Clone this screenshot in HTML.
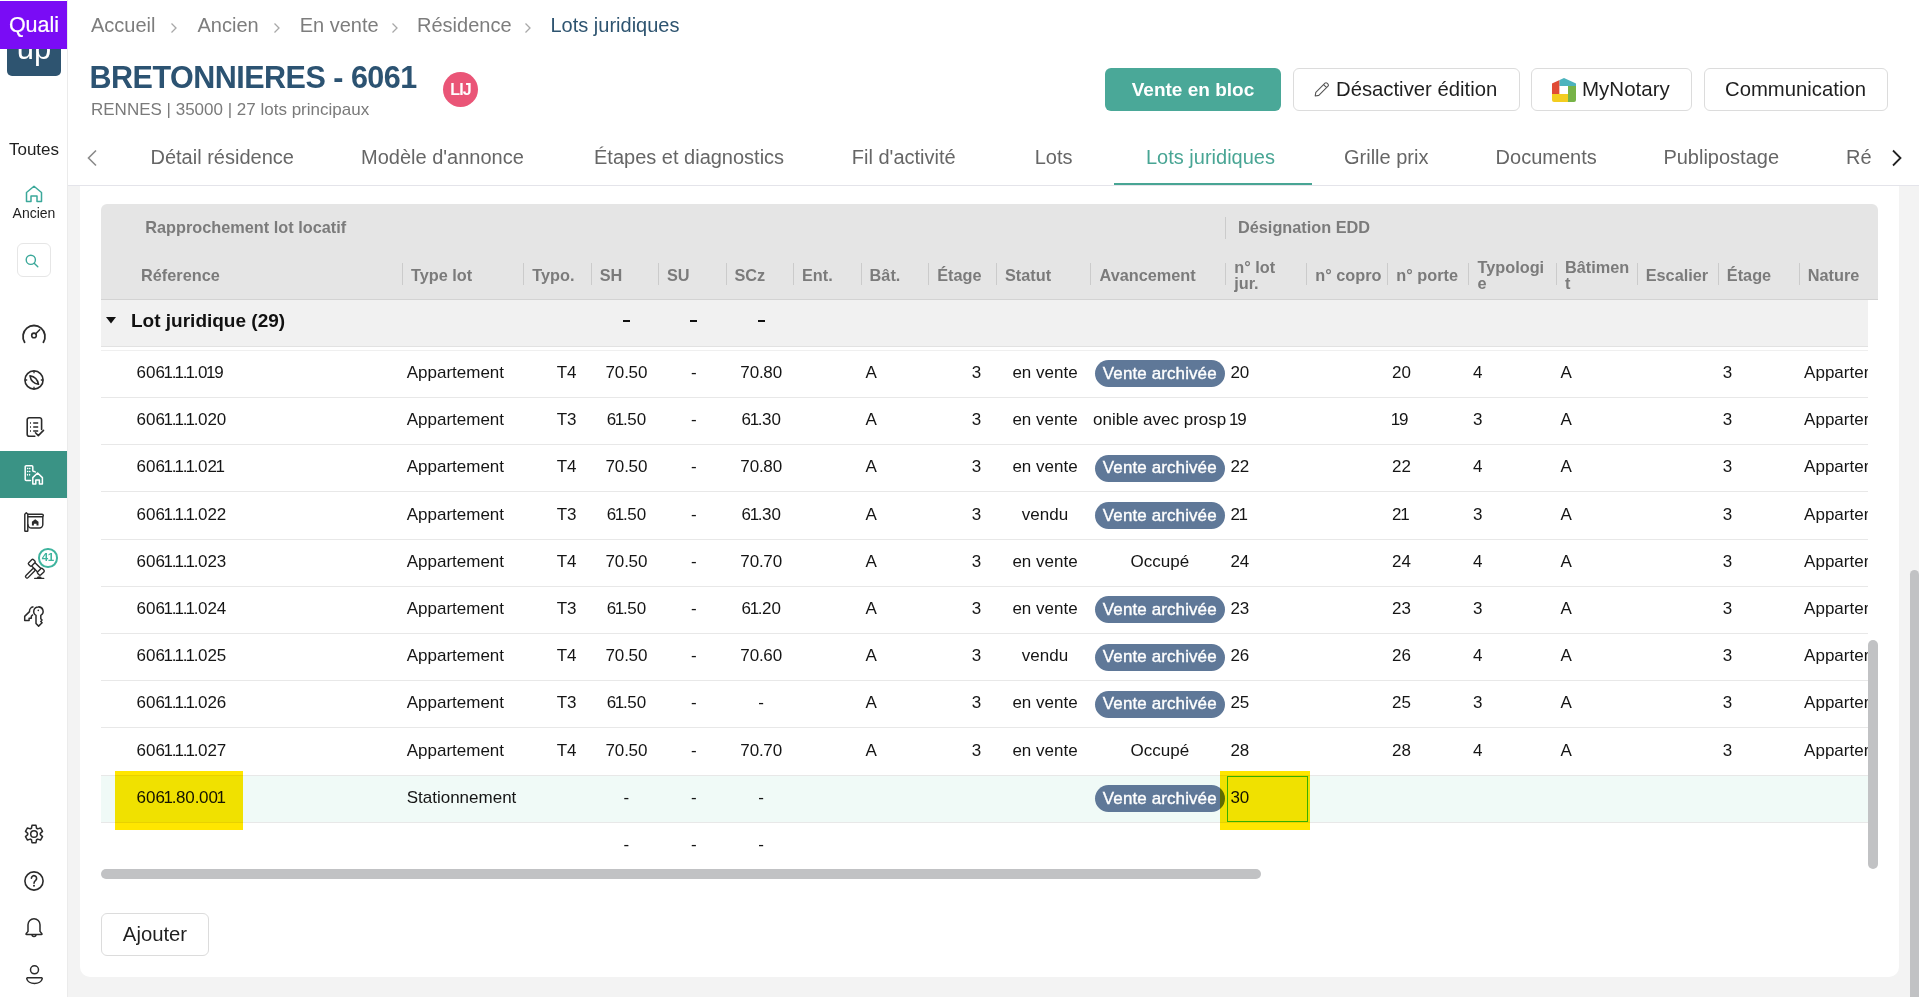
<!DOCTYPE html>
<html><head><meta charset="utf-8"><title>Lots juridiques</title><style>
html,body{margin:0;padding:0;}
body{width:1919px;height:997px;position:relative;overflow:hidden;background:#f3f3f3;font-family:"Liberation Sans",sans-serif;}
.t{position:absolute;line-height:1;white-space:nowrap;}
svg{position:absolute;overflow:visible;}
</style></head><body>
<div style="position:absolute;left:68px;top:0px;width:1851px;height:186px;background:#fff;"></div>
<div style="position:absolute;left:68px;top:185px;width:1851px;height:1px;background:#e4e4ea;"></div>
<div style="position:absolute;left:80px;top:186px;width:1819px;height:791px;background:#fff;border-radius:0 0 10px 10px;"></div>
<div style="position:absolute;left:0px;top:0px;width:67px;height:997px;background:#fff;"></div>
<div style="position:absolute;left:67px;top:0px;width:1px;height:997px;background:#ebebeb;"></div>
<div style="position:absolute;left:7px;top:38px;width:54px;height:38px;background:#2e5470;border-radius:0 0 5px 5px;"></div>
<div class="t" style="left:-266.00px;width:600px;text-align:center;top:33.26px;font-size:31px;color:#fff;">up</div>
<div style="position:absolute;left:0px;top:1px;width:67px;height:48px;background:#7a0cf5;"></div>
<div class="t" style="left:-266.00px;width:600px;text-align:center;top:14.80px;font-size:21.5px;color:#fff;-webkit-text-stroke:0.2px #fff;">Quali</div>
<div class="t" style="left:-266.00px;width:600px;text-align:center;top:140.61px;font-size:17px;color:#1f1f1f;">Toutes</div>
<svg style="left:25px;top:185px" width="18" height="18" viewBox="0 0 18 18"><path d="M1.5 16.5V7.5L9 1.2l7.5 6.3v9h-4.5v-5.5h-6v5.5z" fill="none" stroke="#3ba89a" stroke-width="1.5" stroke-linejoin="round"/></svg>
<div class="t" style="left:-266.00px;width:600px;text-align:center;top:206.15px;font-size:14px;color:#1f1f1f;">Ancien</div>
<div style="position:absolute;left:17px;top:243px;width:32px;height:32px;border:1px solid #e6e6e6;border-radius:6px;background:#fff;"></div>
<svg style="left:24.5px;top:254px" width="14" height="14" viewBox="0 0 14 14"><circle cx="5.8" cy="5.8" r="4.6" fill="none" stroke="#3ba89a" stroke-width="1.4"/><path d="M9.2 9.2l3.6 3.6" stroke="#3ba89a" stroke-width="1.4" stroke-linecap="round"/></svg>
<svg style="left:22px;top:323px" width="24" height="20" viewBox="0 0 24 20"><path d="M2.6 19.2A11 11 0 1 1 21.4 19.2" fill="none" stroke="#2b2b2b" stroke-width="1.8" stroke-linecap="round"/><circle cx="12" cy="12.4" r="2.3" fill="none" stroke="#2b2b2b" stroke-width="1.6"/><path d="M13.7 10.7l4-4" stroke="#2b2b2b" stroke-width="1.6" stroke-linecap="round"/></svg>
<svg style="left:24px;top:370px" width="20" height="20" viewBox="0 0 20 20"><circle cx="10" cy="10" r="9.1" fill="none" stroke="#2b2b2b" stroke-width="1.6"/><path d="M6 5.8Q13.2 7 14.5 14.3Q7.2 13.1 6 5.8z" fill="none" stroke="#2b2b2b" stroke-width="1.6" stroke-linejoin="round"/><path d="M10 1v2.2M10 16.8V19M1 10h2.2M16.8 10H19" stroke="#2b2b2b" stroke-width="1.3"/></svg>
<svg style="left:26px;top:417px" width="18" height="20" viewBox="0 0 18 20"><path d="M8.8 19.2H3.2A2 2 0 0 1 1.2 17.2V2.8A2 2 0 0 1 3.2 0.8h10.4a2 2 0 0 1 2 2V12.4" fill="none" stroke="#2b2b2b" stroke-width="1.6" stroke-linecap="round"/><path d="M4 6h1M7.2 6h5M4 10h1M7.2 10h5M4 14h1M7.2 14h5" stroke="#2b2b2b" stroke-width="1.6"/><path d="M9.5 15.8l2.8 2.8 5.2-5.2" fill="none" stroke="#2b2b2b" stroke-width="1.6" stroke-linecap="round" stroke-linejoin="round"/></svg>
<div style="position:absolute;left:0px;top:451px;width:67px;height:47px;background:#3a9385;"></div>
<svg style="left:24px;top:465px" width="20" height="20" viewBox="0 0 20 20"><path d="M6.5 15.6H2.2a1 1 0 0 1-1-1V1.8a1 1 0 0 1 1-1h5.6a1 1 0 0 1 1 1v3.6a1 1 0 0 0 1 1h0.4a1 1 0 0 1 1 0.6" fill="none" stroke="#fff" stroke-width="1.5" stroke-linecap="round"/><path d="M3.5 3.5h0.3M5.6 3.5h0.3M3.5 6.5h0.3M5.6 6.5h0.3M3.5 9.5v0.6M5.6 9.5v0.6" stroke="#fff" stroke-width="1.3" stroke-linecap="round"/><path d="M8.8 18.9V12.6l4.8-4.6 4.8 4.6v6.3h-3v-3.8h-3.6v3.8z" fill="none" stroke="#fff" stroke-width="1.5" stroke-linejoin="round"/></svg>
<svg style="left:24px;top:512px" width="20" height="20" viewBox="0 0 20 20"><g fill="none" stroke="#2b2b2b" stroke-width="1.45" stroke-linejoin="round"><path d="M0.8 2.2L2.3 0.8 3.8 2.2V18.8a0.5 0.5 0 0 1-0.5 0.5H1.3a0.5 0.5 0 0 1-0.5-0.5z"/><path d="M3.8 2.2h14.2a1.3 1.3 0 0 1 0 2.6H3.8"/><path d="M18.8 4.8v7.8a3.4 3.4 0 0 1-3.4 3.4H7.6A3.8 3.8 0 0 1 3.8 12.2"/></g><path d="M7.9 13.6V9.8l3.3-2.6 3.3 2.6v3.8h-2v-1.9h-2.6v1.9z" fill="#2b2b2b"/></svg>
<svg style="left:24px;top:559px" width="20" height="20" viewBox="0 0 20 20"><g transform="translate(12.3 8.3) rotate(45)" fill="none" stroke="#2b2b2b" stroke-width="1.4" stroke-linejoin="round"><rect x="-8.6" y="-3.4" width="4.4" height="6.8" rx="1.3"/><path d="M-4.2 -2.4H4.2M-4.2 2.4H4.2"/><rect x="4.2" y="-3.4" width="4.4" height="6.8" rx="1.3"/><rect x="-1.5" y="2.4" width="3" height="12.2" rx="1.5"/></g><path d="M10.6 19.3h9.2" stroke="#2b2b2b" stroke-width="1.3" stroke-linecap="round"/><path d="M12.6 19.2q0.2-2 2.6-2 2.4 0 2.6 2z" fill="#2b2b2b"/></svg>
<div style="position:absolute;left:38px;top:548px;width:15.5px;height:15.5px;border:2px solid #3fb49e;border-radius:50%;background:#fff;"></div>
<div class="t" style="left:-252.25px;width:600px;text-align:center;top:552.47px;font-size:11.5px;color:#3fb49e;font-weight:bold;letter-spacing:-0.3px;">41</div>
<svg style="left:24px;top:606px" width="20" height="21" viewBox="0 0 20 21"><g fill="none" stroke="#2b2b2b" stroke-width="1.5" stroke-linejoin="round"><path d="M9.5 0.7A4.6 4.6 0 0 0 5.5 5.6L0.7 10.4v4.2h4.4v-2.3h2.2v-2l1.6-1.8"/><path d="M14.2 0.9a4.5 4.5 0 0 0-2.2 8.4v8.2l2.6 2.6 3.5-3.4-1.3-1.2 1.2-1.4-1.2-1.3v-3.5a4.5 4.5 0 0 0-2.6-8.4z"/></g><circle cx="14.3" cy="4.4" r="0.8" fill="#2b2b2b"/></svg>
<svg style="left:24.2px;top:823.9px" width="20" height="20" viewBox="0 0 20 20"><path d="M12.56 4.24 L12.00 1.33 L8.00 1.33 L7.44 4.24 L6.30 4.90 L3.49 3.93 L1.49 7.40 L3.73 9.34 L3.73 10.66 L1.49 12.60 L3.49 16.07 L6.30 15.10 L7.44 15.76 L8.00 18.67 L12.00 18.67 L12.56 15.76 L13.70 15.10 L16.51 16.07 L18.51 12.60 L16.27 10.66 L16.27 9.34 L18.51 7.40 L16.51 3.93 L13.70 4.90z" fill="none" stroke="#2b2b2b" stroke-width="1.5" stroke-linejoin="round"/><circle cx="10" cy="10" r="3.3" fill="none" stroke="#2b2b2b" stroke-width="1.5"/></svg>
<svg style="left:24px;top:871px" width="20" height="20" viewBox="0 0 20 20"><circle cx="10" cy="10" r="9.1" fill="none" stroke="#2b2b2b" stroke-width="1.6"/><path d="M7.4 7.3A2.6 2.6 0 1 1 11.6 9.3C10.5 10.2 10 11 10 12.2" fill="none" stroke="#2b2b2b" stroke-width="1.6" stroke-linecap="round"/><circle cx="10" cy="14.8" r="1" fill="#2b2b2b"/></svg>
<svg style="left:25px;top:918px" width="18" height="20" viewBox="0 0 18 20"><path d="M9 0.8A6 6 0 0 0 3 6.8v6.6L1.1 15.8q-0.3 0.6 0.4 0.6h15q0.7 0 0.4-0.6L15 13.4V6.8A6 6 0 0 0 9 0.8z" fill="none" stroke="#2b2b2b" stroke-width="1.5" stroke-linejoin="round"/><path d="M7 16.6a2 2 0 0 0 4 0" fill="none" stroke="#2b2b2b" stroke-width="1.5"/></svg>
<svg style="left:26px;top:965px" width="17" height="20" viewBox="0 0 17 20"><circle cx="8.5" cy="4.8" r="4" fill="none" stroke="#2b2b2b" stroke-width="1.5"/><path d="M1.2 12.8h14.6a0.8 0.8 0 0 1 0.4 1A7.8 5.6 0 0 1 0.8 13.8a0.8 0.8 0 0 1 0.4-1z" fill="none" stroke="#2b2b2b" stroke-width="1.5" stroke-linejoin="round"/></svg>
<div class="t" style="left:91.00px;top:15.07px;font-size:20px;color:#7d7d7d;">Accueil</div>
<div class="t" style="left:197.50px;top:15.07px;font-size:20px;color:#7d7d7d;">Ancien</div>
<div class="t" style="left:299.70px;top:15.07px;font-size:20px;color:#7d7d7d;">En vente</div>
<div class="t" style="left:417.00px;top:15.07px;font-size:20px;color:#7d7d7d;">Résidence</div>
<div class="t" style="left:550.50px;top:15.07px;font-size:20px;color:#2e5470;">Lots juridiques</div>
<svg style="left:170px;top:21.5px" width="8" height="12" viewBox="0 0 8 12"><path d="M1.5 1.5L6 6l-4.5 4.5" fill="none" stroke="#a8a8a8" stroke-width="1.3"/></svg>
<svg style="left:272.5px;top:21.5px" width="8" height="12" viewBox="0 0 8 12"><path d="M1.5 1.5L6 6l-4.5 4.5" fill="none" stroke="#a8a8a8" stroke-width="1.3"/></svg>
<svg style="left:390.5px;top:21.5px" width="8" height="12" viewBox="0 0 8 12"><path d="M1.5 1.5L6 6l-4.5 4.5" fill="none" stroke="#a8a8a8" stroke-width="1.3"/></svg>
<svg style="left:524px;top:21.5px" width="8" height="12" viewBox="0 0 8 12"><path d="M1.5 1.5L6 6l-4.5 4.5" fill="none" stroke="#a8a8a8" stroke-width="1.3"/></svg>
<div class="t" style="left:89.50px;top:62.18px;font-size:30.5px;color:#2c5372;font-weight:bold;letter-spacing:-0.5px;">BRETONNIERES - 6061</div>
<div class="t" style="left:91.00px;top:101.41px;font-size:17px;color:#7a7a7a;">RENNES | 35000 | 27 lots principaux</div>
<div style="position:absolute;left:443px;top:72px;width:35px;height:35px;background:#ea5577;border-radius:50%;"></div>
<div class="t" style="left:160.50px;width:600px;text-align:center;top:82.26px;font-size:16px;color:#fff;font-weight:bold;letter-spacing:-0.9px;">LIJ</div>
<div style="position:absolute;left:1105px;top:68px;width:176px;height:43px;background:#4aa898;border-radius:6px;"></div>
<div class="t" style="left:893.00px;width:600px;text-align:center;top:80.22px;font-size:19px;color:#fff;font-weight:bold;">Vente en bloc</div>
<div style="position:absolute;left:1292.5px;top:68px;width:227px;height:43px;border:1px solid #dcdcdc;border-radius:6px;background:#fff;box-sizing:border-box;"></div>
<div style="position:absolute;left:1530.5px;top:68px;width:161px;height:43px;border:1px solid #dcdcdc;border-radius:6px;background:#fff;box-sizing:border-box;"></div>
<div style="position:absolute;left:1703.5px;top:68px;width:184px;height:43px;border:1px solid #dcdcdc;border-radius:6px;background:#fff;box-sizing:border-box;"></div>
<svg style="left:1314px;top:82px" width="16" height="15" viewBox="0 0 16 15"><path d="M1.2 14l0.6-3.6L11 1.2a1.4 1.4 0 0 1 2 0l1 1a1.4 1.4 0 0 1 0 2L4.8 13.4z M9.6 2.6l3 3" fill="none" stroke="#555" stroke-width="1.1" stroke-linejoin="round"/></svg>
<div class="t" style="left:1336.00px;top:79.12px;font-size:20.3px;color:#1f1f1f;">Désactiver édition</div>
<svg style="left:1551.5px;top:78px" width="24" height="24" viewBox="0 0 24 24"><defs><clipPath id="mn"><path d="M0 5.6L12 0 24 5.6V22a2 2 0 0 1-2 2H2a2 2 0 0 1-2-2z"/></clipPath></defs><g clip-path="url(#mn)"><rect x="0" y="0" width="7.6" height="16" fill="#e04b35"/><rect x="7.6" y="0" width="16.4" height="8" fill="#4cb3bd"/><rect x="16" y="8" width="8" height="16" fill="#77b347"/><rect x="0" y="16" width="16" height="8" fill="#f3cd1f"/><rect x="7.6" y="8" width="8.4" height="8" fill="#fff"/></g></svg>
<div class="t" style="left:1582.00px;top:78.95px;font-size:20.5px;color:#1f1f1f;">MyNotary</div>
<div class="t" style="left:1495.50px;width:600px;text-align:center;top:79.12px;font-size:20.3px;color:#1f1f1f;">Communication</div>
<svg style="left:86px;top:149px" width="12" height="18" viewBox="0 0 12 18"><path d="M10 1.5L2.5 9l7.5 7.5" fill="none" stroke="#8a8a8a" stroke-width="1.6"/></svg>
<div class="t" style="left:150.50px;top:147.37px;font-size:20px;color:#666;">Détail résidence</div>
<div class="t" style="left:361.00px;top:147.37px;font-size:20px;color:#666;">Modèle d'annonce</div>
<div class="t" style="left:594.00px;top:147.37px;font-size:20px;color:#666;">Étapes et diagnostics</div>
<div class="t" style="left:851.80px;top:147.37px;font-size:20px;color:#666;">Fil d'activité</div>
<div class="t" style="left:1034.70px;top:147.37px;font-size:20px;color:#666;">Lots</div>
<div class="t" style="left:1344.00px;top:147.37px;font-size:20px;color:#666;">Grille prix</div>
<div class="t" style="left:1495.60px;top:147.37px;font-size:20px;color:#666;">Documents</div>
<div class="t" style="left:1663.40px;top:147.37px;font-size:20px;color:#666;">Publipostage</div>
<div class="t" style="left:1146.00px;top:147.37px;font-size:20px;color:#48a594;">Lots juridiques</div>
<div style="position:absolute;left:1114px;top:182.8px;width:198px;height:2.6px;background:#48a594;"></div>
<div style="position:absolute;left:1846px;top:140px;width:25px;height:35px;overflow:hidden;"><div class="t" style="left:0.00px;top:7.37px;font-size:20px;color:#666;">Réalisations</div>
</div>
<svg style="left:1891px;top:149px" width="12" height="18" viewBox="0 0 12 18"><path d="M2 1.5L9.5 9 2 16.5" fill="none" stroke="#222" stroke-width="1.8"/></svg>
<div style="position:absolute;left:101px;top:204px;width:1777px;height:95px;background:#e5e5e5;border-radius:6px 6px 0 0;"></div>
<div style="position:absolute;left:101px;top:299px;width:1777px;height:1px;background:#d3d3d3;"></div>
<div class="t" style="left:145.30px;top:219.30px;font-size:16.3px;color:#7b7b7b;font-weight:bold;">Rapprochement lot locatif</div>
<div class="t" style="left:1238.00px;top:219.30px;font-size:16.3px;color:#7b7b7b;font-weight:bold;">Désignation EDD</div>
<div style="position:absolute;left:1225px;top:216.5px;width:1px;height:22px;background:#cbcbcb;"></div>
<div style="position:absolute;left:402px;top:263px;width:1px;height:22px;background:#cbcbcb;"></div>
<div style="position:absolute;left:523px;top:263px;width:1px;height:22px;background:#cbcbcb;"></div>
<div style="position:absolute;left:591px;top:263px;width:1px;height:22px;background:#cbcbcb;"></div>
<div style="position:absolute;left:658px;top:263px;width:1px;height:22px;background:#cbcbcb;"></div>
<div style="position:absolute;left:725.5px;top:263px;width:1px;height:22px;background:#cbcbcb;"></div>
<div style="position:absolute;left:793px;top:263px;width:1px;height:22px;background:#cbcbcb;"></div>
<div style="position:absolute;left:860.6px;top:263px;width:1px;height:22px;background:#cbcbcb;"></div>
<div style="position:absolute;left:928px;top:263px;width:1px;height:22px;background:#cbcbcb;"></div>
<div style="position:absolute;left:995.5px;top:263px;width:1px;height:22px;background:#cbcbcb;"></div>
<div style="position:absolute;left:1090px;top:263px;width:1px;height:22px;background:#cbcbcb;"></div>
<div style="position:absolute;left:1225px;top:263px;width:1px;height:22px;background:#cbcbcb;"></div>
<div style="position:absolute;left:1306px;top:263px;width:1px;height:22px;background:#cbcbcb;"></div>
<div style="position:absolute;left:1387px;top:263px;width:1px;height:22px;background:#cbcbcb;"></div>
<div style="position:absolute;left:1468px;top:263px;width:1px;height:22px;background:#cbcbcb;"></div>
<div style="position:absolute;left:1556px;top:263px;width:1px;height:22px;background:#cbcbcb;"></div>
<div style="position:absolute;left:1637px;top:263px;width:1px;height:22px;background:#cbcbcb;"></div>
<div style="position:absolute;left:1718px;top:263px;width:1px;height:22px;background:#cbcbcb;"></div>
<div style="position:absolute;left:1799px;top:263px;width:1px;height:22px;background:#cbcbcb;"></div>
<div class="t" style="left:141.00px;top:266.50px;font-size:16.3px;color:#7b7b7b;font-weight:bold;">Réference</div>
<div class="t" style="left:411.00px;top:266.50px;font-size:16.3px;color:#7b7b7b;font-weight:bold;">Type lot</div>
<div class="t" style="left:532.30px;top:266.50px;font-size:16.3px;color:#7b7b7b;font-weight:bold;">Typo.</div>
<div class="t" style="left:599.70px;top:266.50px;font-size:16.3px;color:#7b7b7b;font-weight:bold;">SH</div>
<div class="t" style="left:667.00px;top:266.50px;font-size:16.3px;color:#7b7b7b;font-weight:bold;">SU</div>
<div class="t" style="left:734.50px;top:266.50px;font-size:16.3px;color:#7b7b7b;font-weight:bold;">SCz</div>
<div class="t" style="left:802.00px;top:266.50px;font-size:16.3px;color:#7b7b7b;font-weight:bold;">Ent.</div>
<div class="t" style="left:869.60px;top:266.50px;font-size:16.3px;color:#7b7b7b;font-weight:bold;">Bât.</div>
<div class="t" style="left:937.20px;top:266.50px;font-size:16.3px;color:#7b7b7b;font-weight:bold;">Étage</div>
<div class="t" style="left:1005.00px;top:266.50px;font-size:16.3px;color:#7b7b7b;font-weight:bold;">Statut</div>
<div class="t" style="left:1099.50px;top:266.50px;font-size:16.3px;color:#7b7b7b;font-weight:bold;">Avancement</div>
<div class="t" style="left:1315.30px;top:266.50px;font-size:16.3px;color:#7b7b7b;font-weight:bold;">n° copro</div>
<div class="t" style="left:1396.30px;top:266.50px;font-size:16.3px;color:#7b7b7b;font-weight:bold;">n° porte</div>
<div class="t" style="left:1645.70px;top:266.50px;font-size:16.3px;color:#7b7b7b;font-weight:bold;">Escalier</div>
<div class="t" style="left:1726.80px;top:266.50px;font-size:16.3px;color:#7b7b7b;font-weight:bold;">Étage</div>
<div class="t" style="left:1807.80px;top:266.50px;font-size:16.3px;color:#7b7b7b;font-weight:bold;">Nature</div>
<div class="t" style="left:1234.20px;top:258.60px;font-size:16.3px;color:#7b7b7b;font-weight:bold;">n° lot</div>
<div class="t" style="left:1234.20px;top:274.90px;font-size:16.3px;color:#7b7b7b;font-weight:bold;">jur.</div>
<div class="t" style="left:1477.50px;top:258.60px;font-size:16.3px;color:#7b7b7b;font-weight:bold;">Typologi</div>
<div class="t" style="left:1477.50px;top:274.90px;font-size:16.3px;color:#7b7b7b;font-weight:bold;">e</div>
<div class="t" style="left:1565.00px;top:258.60px;font-size:16.3px;color:#7b7b7b;font-weight:bold;">Bâtimen</div>
<div class="t" style="left:1565.00px;top:274.90px;font-size:16.3px;color:#7b7b7b;font-weight:bold;">t</div>
<div style="position:absolute;left:101px;top:300px;width:1767px;height:46px;background:#f1f1f1;"></div>
<div style="position:absolute;left:101px;top:346px;width:1767px;height:1px;background:#e2e2e2;"></div>
<div style="position:absolute;left:101px;top:350px;width:1767px;height:1px;background:#efefef;"></div>
<svg style="left:106px;top:316.5px" width="10" height="7" viewBox="0 0 10 7"><path d="M0 0h10L5 6.5z" fill="#111"/></svg>
<div class="t" style="left:131.00px;top:310.92px;font-size:19px;color:#111;font-weight:bold;">Lot juridique (29)</div>
<div style="position:absolute;left:622.9px;top:320px;width:7px;height:2.2px;background:#111;"></div>
<div style="position:absolute;left:690.3px;top:320px;width:7px;height:2.2px;background:#111;"></div>
<div style="position:absolute;left:757.7px;top:320px;width:7px;height:2.2px;background:#111;"></div>
<div style="position:absolute;left:0;top:0;width:1868px;height:997px;overflow:hidden;">
<div style="position:absolute;left:101px;top:775.2px;width:1767px;height:47px;background:#f0faf7;"></div>
<div style="position:absolute;left:101px;top:397.0px;width:1767px;height:1px;background:#e8e8e8;"></div>
<div class="t" style="left:136.50px;top:364.01px;font-size:17px;color:#151515;">606<span style="margin:0 -1.3px">1</span><span style="margin-right:-0.6px">.</span><span style="margin:0 -1.3px">1</span><span style="margin-right:-0.6px">.</span><span style="margin:0 -1.3px">1</span><span style="margin-right:-0.6px">.</span>0<span style="margin:0 -1.3px">1</span>9</div>
<div class="t" style="left:406.70px;top:364.01px;font-size:17px;color:#151515;">Appartement</div>
<div class="t" style="left:-23.50px;width:600px;text-align:right;top:364.01px;font-size:17px;color:#151515;">T4</div>
<div class="t" style="left:326.40px;width:600px;text-align:center;top:364.01px;font-size:17px;color:#151515;">70<span style="margin-right:-0.6px">.</span>50</div>
<div class="t" style="left:393.80px;width:600px;text-align:center;top:364.01px;font-size:17px;color:#151515;">-</div>
<div class="t" style="left:461.20px;width:600px;text-align:center;top:364.01px;font-size:17px;color:#151515;">70<span style="margin-right:-0.6px">.</span>80</div>
<div class="t" style="left:865.60px;top:364.01px;font-size:17px;color:#151515;">A</div>
<div class="t" style="left:381.20px;width:600px;text-align:right;top:364.01px;font-size:17px;color:#151515;">3</div>
<div class="t" style="left:745.00px;width:600px;text-align:center;top:364.01px;font-size:17px;color:#151515;">en vente</div>
<div style="position:absolute;left:1095px;top:360.3px;width:130px;height:27px;background:#5f7898;border-radius:14px;"></div>
<div class="t" style="left:859.80px;width:600px;text-align:center;top:364.91px;font-size:17px;color:#fff;letter-spacing:0.1px;-webkit-text-stroke:0.35px #fff;">Vente archivée</div>
<div class="t" style="left:1230.40px;top:364.01px;font-size:17px;color:#151515;">20</div>
<div class="t" style="left:1392.00px;top:364.01px;font-size:17px;color:#151515;">20</div>
<div class="t" style="left:1473.00px;top:364.01px;font-size:17px;color:#151515;">4</div>
<div class="t" style="left:1560.50px;top:364.01px;font-size:17px;color:#151515;">A</div>
<div class="t" style="left:1722.70px;top:364.01px;font-size:17px;color:#151515;">3</div>
<div class="t" style="left:1804.10px;top:364.01px;font-size:17px;color:#151515;">Appartement</div>
<div style="position:absolute;left:101px;top:444.2px;width:1767px;height:1px;background:#e8e8e8;"></div>
<div class="t" style="left:136.50px;top:411.21px;font-size:17px;color:#151515;">606<span style="margin:0 -1.3px">1</span><span style="margin-right:-0.6px">.</span><span style="margin:0 -1.3px">1</span><span style="margin-right:-0.6px">.</span><span style="margin:0 -1.3px">1</span><span style="margin-right:-0.6px">.</span>020</div>
<div class="t" style="left:406.70px;top:411.21px;font-size:17px;color:#151515;">Appartement</div>
<div class="t" style="left:-23.50px;width:600px;text-align:right;top:411.21px;font-size:17px;color:#151515;">T3</div>
<div class="t" style="left:326.40px;width:600px;text-align:center;top:411.21px;font-size:17px;color:#151515;">6<span style="margin:0 -1.3px">1</span><span style="margin-right:-0.6px">.</span>50</div>
<div class="t" style="left:393.80px;width:600px;text-align:center;top:411.21px;font-size:17px;color:#151515;">-</div>
<div class="t" style="left:461.20px;width:600px;text-align:center;top:411.21px;font-size:17px;color:#151515;">6<span style="margin:0 -1.3px">1</span><span style="margin-right:-0.6px">.</span>30</div>
<div class="t" style="left:865.60px;top:411.21px;font-size:17px;color:#151515;">A</div>
<div class="t" style="left:381.20px;width:600px;text-align:right;top:411.21px;font-size:17px;color:#151515;">3</div>
<div class="t" style="left:745.00px;width:600px;text-align:center;top:411.21px;font-size:17px;color:#151515;">en vente</div>
<div style="position:absolute;left:1092px;top:403.6px;width:134px;height:30px;overflow:hidden;"><div class="t" style="left:1.00px;top:7.61px;font-size:17px;color:#151515;">onible avec prospect</div>
</div>
<div class="t" style="left:1230.40px;top:411.21px;font-size:17px;color:#151515;"><span style="margin:0 -1.3px">1</span>9</div>
<div class="t" style="left:1392.00px;top:411.21px;font-size:17px;color:#151515;"><span style="margin:0 -1.3px">1</span>9</div>
<div class="t" style="left:1473.00px;top:411.21px;font-size:17px;color:#151515;">3</div>
<div class="t" style="left:1560.50px;top:411.21px;font-size:17px;color:#151515;">A</div>
<div class="t" style="left:1722.70px;top:411.21px;font-size:17px;color:#151515;">3</div>
<div class="t" style="left:1804.10px;top:411.21px;font-size:17px;color:#151515;">Appartement</div>
<div style="position:absolute;left:101px;top:491.4px;width:1767px;height:1px;background:#e8e8e8;"></div>
<div class="t" style="left:136.50px;top:458.41px;font-size:17px;color:#151515;">606<span style="margin:0 -1.3px">1</span><span style="margin-right:-0.6px">.</span><span style="margin:0 -1.3px">1</span><span style="margin-right:-0.6px">.</span><span style="margin:0 -1.3px">1</span><span style="margin-right:-0.6px">.</span>02<span style="margin:0 -1.3px">1</span></div>
<div class="t" style="left:406.70px;top:458.41px;font-size:17px;color:#151515;">Appartement</div>
<div class="t" style="left:-23.50px;width:600px;text-align:right;top:458.41px;font-size:17px;color:#151515;">T4</div>
<div class="t" style="left:326.40px;width:600px;text-align:center;top:458.41px;font-size:17px;color:#151515;">70<span style="margin-right:-0.6px">.</span>50</div>
<div class="t" style="left:393.80px;width:600px;text-align:center;top:458.41px;font-size:17px;color:#151515;">-</div>
<div class="t" style="left:461.20px;width:600px;text-align:center;top:458.41px;font-size:17px;color:#151515;">70<span style="margin-right:-0.6px">.</span>80</div>
<div class="t" style="left:865.60px;top:458.41px;font-size:17px;color:#151515;">A</div>
<div class="t" style="left:381.20px;width:600px;text-align:right;top:458.41px;font-size:17px;color:#151515;">3</div>
<div class="t" style="left:745.00px;width:600px;text-align:center;top:458.41px;font-size:17px;color:#151515;">en vente</div>
<div style="position:absolute;left:1095px;top:454.7px;width:130px;height:27px;background:#5f7898;border-radius:14px;"></div>
<div class="t" style="left:859.80px;width:600px;text-align:center;top:459.31px;font-size:17px;color:#fff;letter-spacing:0.1px;-webkit-text-stroke:0.35px #fff;">Vente archivée</div>
<div class="t" style="left:1230.40px;top:458.41px;font-size:17px;color:#151515;">22</div>
<div class="t" style="left:1392.00px;top:458.41px;font-size:17px;color:#151515;">22</div>
<div class="t" style="left:1473.00px;top:458.41px;font-size:17px;color:#151515;">4</div>
<div class="t" style="left:1560.50px;top:458.41px;font-size:17px;color:#151515;">A</div>
<div class="t" style="left:1722.70px;top:458.41px;font-size:17px;color:#151515;">3</div>
<div class="t" style="left:1804.10px;top:458.41px;font-size:17px;color:#151515;">Appartement</div>
<div style="position:absolute;left:101px;top:538.6px;width:1767px;height:1px;background:#e8e8e8;"></div>
<div class="t" style="left:136.50px;top:505.61px;font-size:17px;color:#151515;">606<span style="margin:0 -1.3px">1</span><span style="margin-right:-0.6px">.</span><span style="margin:0 -1.3px">1</span><span style="margin-right:-0.6px">.</span><span style="margin:0 -1.3px">1</span><span style="margin-right:-0.6px">.</span>022</div>
<div class="t" style="left:406.70px;top:505.61px;font-size:17px;color:#151515;">Appartement</div>
<div class="t" style="left:-23.50px;width:600px;text-align:right;top:505.61px;font-size:17px;color:#151515;">T3</div>
<div class="t" style="left:326.40px;width:600px;text-align:center;top:505.61px;font-size:17px;color:#151515;">6<span style="margin:0 -1.3px">1</span><span style="margin-right:-0.6px">.</span>50</div>
<div class="t" style="left:393.80px;width:600px;text-align:center;top:505.61px;font-size:17px;color:#151515;">-</div>
<div class="t" style="left:461.20px;width:600px;text-align:center;top:505.61px;font-size:17px;color:#151515;">6<span style="margin:0 -1.3px">1</span><span style="margin-right:-0.6px">.</span>30</div>
<div class="t" style="left:865.60px;top:505.61px;font-size:17px;color:#151515;">A</div>
<div class="t" style="left:381.20px;width:600px;text-align:right;top:505.61px;font-size:17px;color:#151515;">3</div>
<div class="t" style="left:745.00px;width:600px;text-align:center;top:505.61px;font-size:17px;color:#151515;">vendu</div>
<div style="position:absolute;left:1095px;top:501.9px;width:130px;height:27px;background:#5f7898;border-radius:14px;"></div>
<div class="t" style="left:859.80px;width:600px;text-align:center;top:506.51px;font-size:17px;color:#fff;letter-spacing:0.1px;-webkit-text-stroke:0.35px #fff;">Vente archivée</div>
<div class="t" style="left:1230.40px;top:505.61px;font-size:17px;color:#151515;">2<span style="margin:0 -1.3px">1</span></div>
<div class="t" style="left:1392.00px;top:505.61px;font-size:17px;color:#151515;">2<span style="margin:0 -1.3px">1</span></div>
<div class="t" style="left:1473.00px;top:505.61px;font-size:17px;color:#151515;">3</div>
<div class="t" style="left:1560.50px;top:505.61px;font-size:17px;color:#151515;">A</div>
<div class="t" style="left:1722.70px;top:505.61px;font-size:17px;color:#151515;">3</div>
<div class="t" style="left:1804.10px;top:505.61px;font-size:17px;color:#151515;">Appartement</div>
<div style="position:absolute;left:101px;top:585.8px;width:1767px;height:1px;background:#e8e8e8;"></div>
<div class="t" style="left:136.50px;top:552.81px;font-size:17px;color:#151515;">606<span style="margin:0 -1.3px">1</span><span style="margin-right:-0.6px">.</span><span style="margin:0 -1.3px">1</span><span style="margin-right:-0.6px">.</span><span style="margin:0 -1.3px">1</span><span style="margin-right:-0.6px">.</span>023</div>
<div class="t" style="left:406.70px;top:552.81px;font-size:17px;color:#151515;">Appartement</div>
<div class="t" style="left:-23.50px;width:600px;text-align:right;top:552.81px;font-size:17px;color:#151515;">T4</div>
<div class="t" style="left:326.40px;width:600px;text-align:center;top:552.81px;font-size:17px;color:#151515;">70<span style="margin-right:-0.6px">.</span>50</div>
<div class="t" style="left:393.80px;width:600px;text-align:center;top:552.81px;font-size:17px;color:#151515;">-</div>
<div class="t" style="left:461.20px;width:600px;text-align:center;top:552.81px;font-size:17px;color:#151515;">70<span style="margin-right:-0.6px">.</span>70</div>
<div class="t" style="left:865.60px;top:552.81px;font-size:17px;color:#151515;">A</div>
<div class="t" style="left:381.20px;width:600px;text-align:right;top:552.81px;font-size:17px;color:#151515;">3</div>
<div class="t" style="left:745.00px;width:600px;text-align:center;top:552.81px;font-size:17px;color:#151515;">en vente</div>
<div class="t" style="left:859.80px;width:600px;text-align:center;top:552.81px;font-size:17px;color:#151515;">Occupé</div>
<div class="t" style="left:1230.40px;top:552.81px;font-size:17px;color:#151515;">24</div>
<div class="t" style="left:1392.00px;top:552.81px;font-size:17px;color:#151515;">24</div>
<div class="t" style="left:1473.00px;top:552.81px;font-size:17px;color:#151515;">4</div>
<div class="t" style="left:1560.50px;top:552.81px;font-size:17px;color:#151515;">A</div>
<div class="t" style="left:1722.70px;top:552.81px;font-size:17px;color:#151515;">3</div>
<div class="t" style="left:1804.10px;top:552.81px;font-size:17px;color:#151515;">Appartement</div>
<div style="position:absolute;left:101px;top:633.0px;width:1767px;height:1px;background:#e8e8e8;"></div>
<div class="t" style="left:136.50px;top:600.01px;font-size:17px;color:#151515;">606<span style="margin:0 -1.3px">1</span><span style="margin-right:-0.6px">.</span><span style="margin:0 -1.3px">1</span><span style="margin-right:-0.6px">.</span><span style="margin:0 -1.3px">1</span><span style="margin-right:-0.6px">.</span>024</div>
<div class="t" style="left:406.70px;top:600.01px;font-size:17px;color:#151515;">Appartement</div>
<div class="t" style="left:-23.50px;width:600px;text-align:right;top:600.01px;font-size:17px;color:#151515;">T3</div>
<div class="t" style="left:326.40px;width:600px;text-align:center;top:600.01px;font-size:17px;color:#151515;">6<span style="margin:0 -1.3px">1</span><span style="margin-right:-0.6px">.</span>50</div>
<div class="t" style="left:393.80px;width:600px;text-align:center;top:600.01px;font-size:17px;color:#151515;">-</div>
<div class="t" style="left:461.20px;width:600px;text-align:center;top:600.01px;font-size:17px;color:#151515;">6<span style="margin:0 -1.3px">1</span><span style="margin-right:-0.6px">.</span>20</div>
<div class="t" style="left:865.60px;top:600.01px;font-size:17px;color:#151515;">A</div>
<div class="t" style="left:381.20px;width:600px;text-align:right;top:600.01px;font-size:17px;color:#151515;">3</div>
<div class="t" style="left:745.00px;width:600px;text-align:center;top:600.01px;font-size:17px;color:#151515;">en vente</div>
<div style="position:absolute;left:1095px;top:596.3px;width:130px;height:27px;background:#5f7898;border-radius:14px;"></div>
<div class="t" style="left:859.80px;width:600px;text-align:center;top:600.91px;font-size:17px;color:#fff;letter-spacing:0.1px;-webkit-text-stroke:0.35px #fff;">Vente archivée</div>
<div class="t" style="left:1230.40px;top:600.01px;font-size:17px;color:#151515;">23</div>
<div class="t" style="left:1392.00px;top:600.01px;font-size:17px;color:#151515;">23</div>
<div class="t" style="left:1473.00px;top:600.01px;font-size:17px;color:#151515;">3</div>
<div class="t" style="left:1560.50px;top:600.01px;font-size:17px;color:#151515;">A</div>
<div class="t" style="left:1722.70px;top:600.01px;font-size:17px;color:#151515;">3</div>
<div class="t" style="left:1804.10px;top:600.01px;font-size:17px;color:#151515;">Appartement</div>
<div style="position:absolute;left:101px;top:680.2px;width:1767px;height:1px;background:#e8e8e8;"></div>
<div class="t" style="left:136.50px;top:647.21px;font-size:17px;color:#151515;">606<span style="margin:0 -1.3px">1</span><span style="margin-right:-0.6px">.</span><span style="margin:0 -1.3px">1</span><span style="margin-right:-0.6px">.</span><span style="margin:0 -1.3px">1</span><span style="margin-right:-0.6px">.</span>025</div>
<div class="t" style="left:406.70px;top:647.21px;font-size:17px;color:#151515;">Appartement</div>
<div class="t" style="left:-23.50px;width:600px;text-align:right;top:647.21px;font-size:17px;color:#151515;">T4</div>
<div class="t" style="left:326.40px;width:600px;text-align:center;top:647.21px;font-size:17px;color:#151515;">70<span style="margin-right:-0.6px">.</span>50</div>
<div class="t" style="left:393.80px;width:600px;text-align:center;top:647.21px;font-size:17px;color:#151515;">-</div>
<div class="t" style="left:461.20px;width:600px;text-align:center;top:647.21px;font-size:17px;color:#151515;">70<span style="margin-right:-0.6px">.</span>60</div>
<div class="t" style="left:865.60px;top:647.21px;font-size:17px;color:#151515;">A</div>
<div class="t" style="left:381.20px;width:600px;text-align:right;top:647.21px;font-size:17px;color:#151515;">3</div>
<div class="t" style="left:745.00px;width:600px;text-align:center;top:647.21px;font-size:17px;color:#151515;">vendu</div>
<div style="position:absolute;left:1095px;top:643.5px;width:130px;height:27px;background:#5f7898;border-radius:14px;"></div>
<div class="t" style="left:859.80px;width:600px;text-align:center;top:648.11px;font-size:17px;color:#fff;letter-spacing:0.1px;-webkit-text-stroke:0.35px #fff;">Vente archivée</div>
<div class="t" style="left:1230.40px;top:647.21px;font-size:17px;color:#151515;">26</div>
<div class="t" style="left:1392.00px;top:647.21px;font-size:17px;color:#151515;">26</div>
<div class="t" style="left:1473.00px;top:647.21px;font-size:17px;color:#151515;">4</div>
<div class="t" style="left:1560.50px;top:647.21px;font-size:17px;color:#151515;">A</div>
<div class="t" style="left:1722.70px;top:647.21px;font-size:17px;color:#151515;">3</div>
<div class="t" style="left:1804.10px;top:647.21px;font-size:17px;color:#151515;">Appartement</div>
<div style="position:absolute;left:101px;top:727.4px;width:1767px;height:1px;background:#e8e8e8;"></div>
<div class="t" style="left:136.50px;top:694.41px;font-size:17px;color:#151515;">606<span style="margin:0 -1.3px">1</span><span style="margin-right:-0.6px">.</span><span style="margin:0 -1.3px">1</span><span style="margin-right:-0.6px">.</span><span style="margin:0 -1.3px">1</span><span style="margin-right:-0.6px">.</span>026</div>
<div class="t" style="left:406.70px;top:694.41px;font-size:17px;color:#151515;">Appartement</div>
<div class="t" style="left:-23.50px;width:600px;text-align:right;top:694.41px;font-size:17px;color:#151515;">T3</div>
<div class="t" style="left:326.40px;width:600px;text-align:center;top:694.41px;font-size:17px;color:#151515;">6<span style="margin:0 -1.3px">1</span><span style="margin-right:-0.6px">.</span>50</div>
<div class="t" style="left:393.80px;width:600px;text-align:center;top:694.41px;font-size:17px;color:#151515;">-</div>
<div class="t" style="left:461.20px;width:600px;text-align:center;top:694.41px;font-size:17px;color:#151515;">-</div>
<div class="t" style="left:865.60px;top:694.41px;font-size:17px;color:#151515;">A</div>
<div class="t" style="left:381.20px;width:600px;text-align:right;top:694.41px;font-size:17px;color:#151515;">3</div>
<div class="t" style="left:745.00px;width:600px;text-align:center;top:694.41px;font-size:17px;color:#151515;">en vente</div>
<div style="position:absolute;left:1095px;top:690.7px;width:130px;height:27px;background:#5f7898;border-radius:14px;"></div>
<div class="t" style="left:859.80px;width:600px;text-align:center;top:695.31px;font-size:17px;color:#fff;letter-spacing:0.1px;-webkit-text-stroke:0.35px #fff;">Vente archivée</div>
<div class="t" style="left:1230.40px;top:694.41px;font-size:17px;color:#151515;">25</div>
<div class="t" style="left:1392.00px;top:694.41px;font-size:17px;color:#151515;">25</div>
<div class="t" style="left:1473.00px;top:694.41px;font-size:17px;color:#151515;">3</div>
<div class="t" style="left:1560.50px;top:694.41px;font-size:17px;color:#151515;">A</div>
<div class="t" style="left:1722.70px;top:694.41px;font-size:17px;color:#151515;">3</div>
<div class="t" style="left:1804.10px;top:694.41px;font-size:17px;color:#151515;">Appartement</div>
<div style="position:absolute;left:101px;top:774.6px;width:1767px;height:1px;background:#e8e8e8;"></div>
<div class="t" style="left:136.50px;top:741.61px;font-size:17px;color:#151515;">606<span style="margin:0 -1.3px">1</span><span style="margin-right:-0.6px">.</span><span style="margin:0 -1.3px">1</span><span style="margin-right:-0.6px">.</span><span style="margin:0 -1.3px">1</span><span style="margin-right:-0.6px">.</span>027</div>
<div class="t" style="left:406.70px;top:741.61px;font-size:17px;color:#151515;">Appartement</div>
<div class="t" style="left:-23.50px;width:600px;text-align:right;top:741.61px;font-size:17px;color:#151515;">T4</div>
<div class="t" style="left:326.40px;width:600px;text-align:center;top:741.61px;font-size:17px;color:#151515;">70<span style="margin-right:-0.6px">.</span>50</div>
<div class="t" style="left:393.80px;width:600px;text-align:center;top:741.61px;font-size:17px;color:#151515;">-</div>
<div class="t" style="left:461.20px;width:600px;text-align:center;top:741.61px;font-size:17px;color:#151515;">70<span style="margin-right:-0.6px">.</span>70</div>
<div class="t" style="left:865.60px;top:741.61px;font-size:17px;color:#151515;">A</div>
<div class="t" style="left:381.20px;width:600px;text-align:right;top:741.61px;font-size:17px;color:#151515;">3</div>
<div class="t" style="left:745.00px;width:600px;text-align:center;top:741.61px;font-size:17px;color:#151515;">en vente</div>
<div class="t" style="left:859.80px;width:600px;text-align:center;top:741.61px;font-size:17px;color:#151515;">Occupé</div>
<div class="t" style="left:1230.40px;top:741.61px;font-size:17px;color:#151515;">28</div>
<div class="t" style="left:1392.00px;top:741.61px;font-size:17px;color:#151515;">28</div>
<div class="t" style="left:1473.00px;top:741.61px;font-size:17px;color:#151515;">4</div>
<div class="t" style="left:1560.50px;top:741.61px;font-size:17px;color:#151515;">A</div>
<div class="t" style="left:1722.70px;top:741.61px;font-size:17px;color:#151515;">3</div>
<div class="t" style="left:1804.10px;top:741.61px;font-size:17px;color:#151515;">Appartement</div>
<div style="position:absolute;left:101px;top:821.8px;width:1767px;height:1px;background:#e8e8e8;"></div>
<div class="t" style="left:136.50px;top:788.81px;font-size:17px;color:#151515;">606<span style="margin:0 -1.3px">1</span><span style="margin-right:-0.6px">.</span>80<span style="margin-right:-0.6px">.</span>00<span style="margin:0 -1.3px">1</span></div>
<div class="t" style="left:406.70px;top:788.81px;font-size:17px;color:#151515;">Stationnement</div>
<div class="t" style="left:326.40px;width:600px;text-align:center;top:788.81px;font-size:17px;color:#151515;">-</div>
<div class="t" style="left:393.80px;width:600px;text-align:center;top:788.81px;font-size:17px;color:#151515;">-</div>
<div class="t" style="left:461.20px;width:600px;text-align:center;top:788.81px;font-size:17px;color:#151515;">-</div>
<div style="position:absolute;left:1095px;top:785.1px;width:130px;height:27px;background:#5f7898;border-radius:14px;"></div>
<div class="t" style="left:859.80px;width:600px;text-align:center;top:789.71px;font-size:17px;color:#fff;letter-spacing:0.1px;-webkit-text-stroke:0.35px #fff;">Vente archivée</div>
<div class="t" style="left:1230.40px;top:788.81px;font-size:17px;color:#151515;">30</div>
<div class="t" style="left:326.40px;width:600px;text-align:center;top:836.01px;font-size:17px;color:#151515;">-</div>
<div class="t" style="left:393.80px;width:600px;text-align:center;top:836.01px;font-size:17px;color:#151515;">-</div>
<div class="t" style="left:461.20px;width:600px;text-align:center;top:836.01px;font-size:17px;color:#151515;">-</div>
</div>
<div style="position:absolute;left:115.4px;top:771.2px;width:127.4px;height:58.5px;background:#ffe600;mix-blend-mode:multiply;"></div>
<div style="position:absolute;left:1220px;top:771.2px;width:90.4px;height:58.6px;background:#ffe600;mix-blend-mode:multiply;"></div>
<div style="position:absolute;left:1227px;top:776.3px;width:81px;height:45.5px;border:1px solid #38b000;box-sizing:border-box;"></div>
<div style="position:absolute;left:101px;top:869px;width:1160px;height:10px;background:#c1c2c4;border-radius:5px;"></div>
<div style="position:absolute;left:1868px;top:640px;width:10px;height:229px;background:#c1c2c4;border-radius:5px;"></div>
<div style="position:absolute;left:1910px;top:570px;width:9px;height:427px;background:#c1c2c4;border-radius:5px 5px 0 0;"></div>
<div style="position:absolute;left:101px;top:913px;width:108px;height:43px;border:1px solid #dcdcdc;border-radius:6px;background:#fff;box-sizing:border-box;"></div>
<div class="t" style="left:-145.00px;width:600px;text-align:center;top:923.62px;font-size:20.3px;color:#1f1f1f;">Ajouter</div>
</body></html>
